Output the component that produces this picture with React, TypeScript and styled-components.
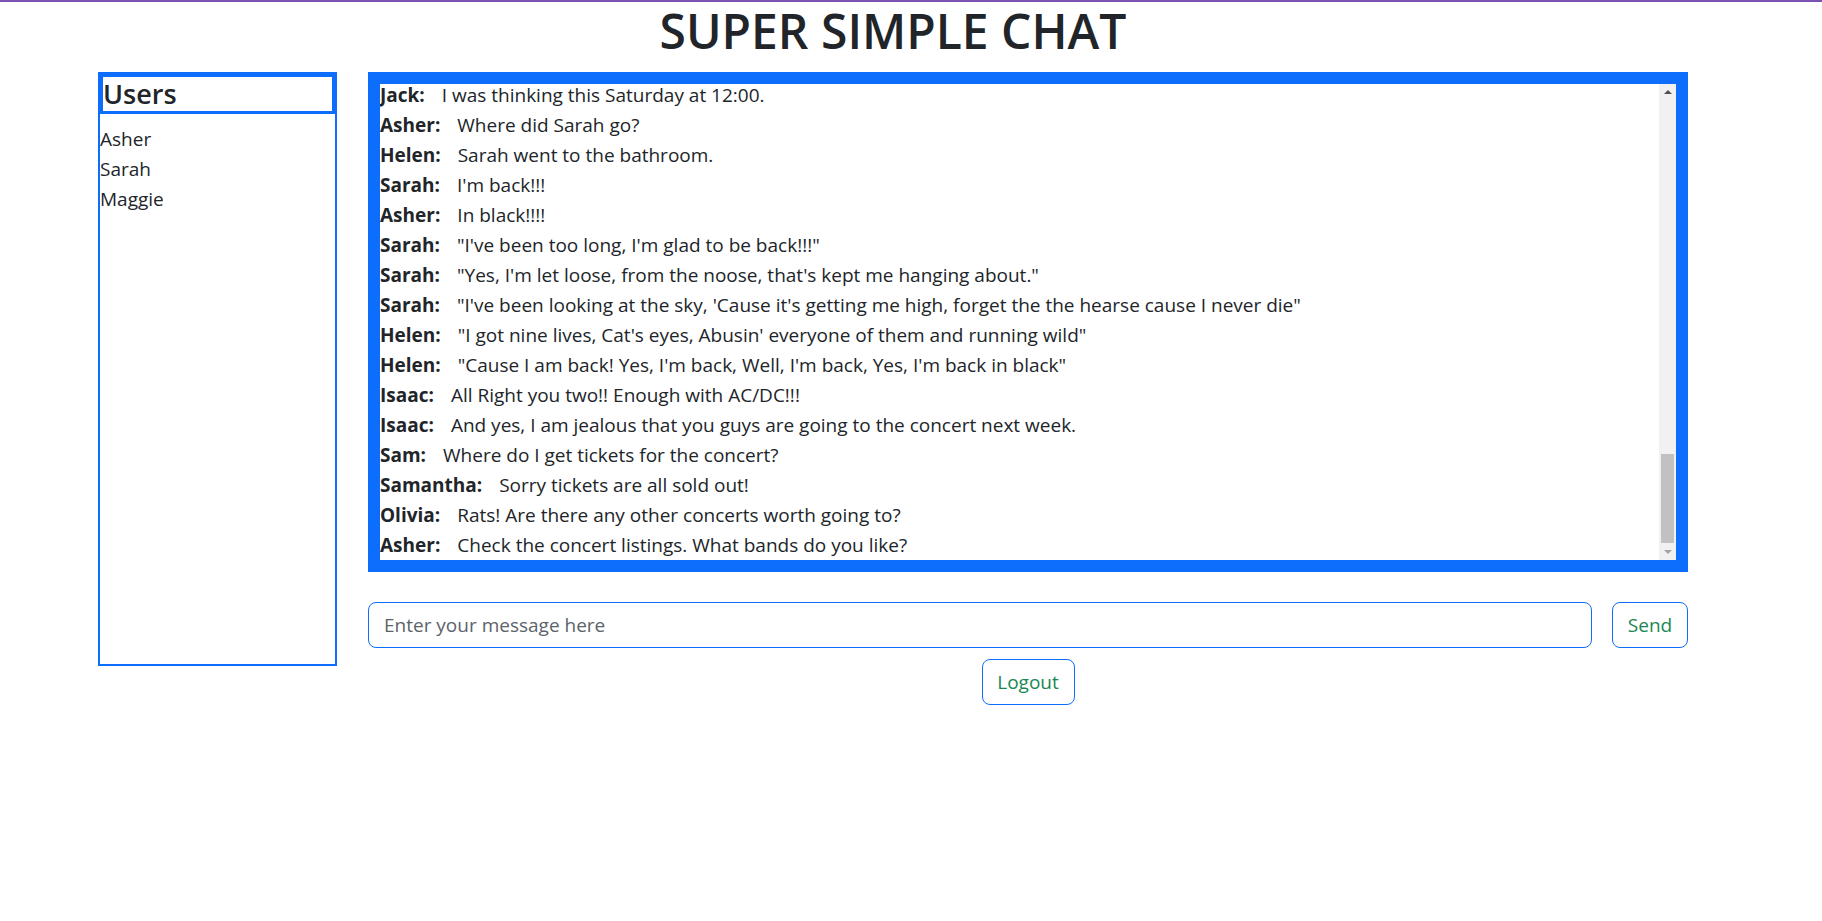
import React from "react";
import styled, { createGlobalStyle } from "styled-components";

const GlobalStyle = createGlobalStyle`
  html, body {
    margin: 0;
    padding: 0;
    background: #ffffff;
  }
  body {
    font-family: "Open Sans", "Noto Sans", "Liberation Sans", sans-serif;
    color: #212529;
  }
  * { box-sizing: border-box; }
`;

const Page = styled.div`
  border-top: 2px solid #7b52b4;
  min-height: 100vh;
`;

const Container = styled.div`
  width: 1590px;
  margin-left: 98px;
  display: flex;
  flex-direction: column;
`;

const Title = styled.h1`
  margin: 0 0 12px 0;
  text-align: center;
  font-size: 48px;
  line-height: 58px;
  font-weight: 600;
  color: #212529;
`;

const Columns = styled.div`
  display: flex;
  gap: 31px;
  align-items: flex-start;
`;

const UsersPanel = styled.aside`
  width: 239px;
  height: 594px;
  border: 2px solid #0d6efd;
  display: flex;
  flex-direction: column;
`;

const UsersHeading = styled.h3`
  margin: 0 0 10px 0;
  border: 3px solid #0d6efd;
  font-size: 27px;
  line-height: 34px;
  font-weight: 600;
  color: #212529;
`;

const UserName = styled.div`
  font-size: 19px;
  line-height: 30px;
  color: #212529;
`;

const ChatColumn = styled.section`
  width: 1320px;
  display: flex;
  flex-direction: column;
  align-items: center;
`;

const ChatFrame = styled.div`
  width: 100%;
  height: 500px;
  border: 12px solid #0d6efd;
  background: #ffffff;
  display: flex;
`;

const Messages = styled.div`
  flex: 1;
  min-width: 0;
  overflow: hidden;
  display: flex;
  flex-direction: column;
  justify-content: flex-end;
`;

const ScrollBar = styled.div`
  width: 17px;
  flex-shrink: 0;
  background: #f1f1f1;
  display: flex;
  flex-direction: column;
`;

const ScrollButton = styled.div<{ $down?: boolean }>`
  height: 17px;
  flex-shrink: 0;
  display: flex;
  align-items: center;
  justify-content: center;

  &::before {
    content: "";
    width: 0;
    height: 0;
    border-left: 4px solid transparent;
    border-right: 4px solid transparent;
    ${(p) =>
      p.$down
        ? "border-top: 4px solid #a3a3a3; margin-top: 1px;"
        : "border-bottom: 4px solid #505050; margin-bottom: 1px;"}
  }
`;

const ScrollTrack = styled.div`
  flex: 1;
  display: flex;
  flex-direction: column;
  justify-content: flex-end;
`;

const ScrollThumb = styled.div`
  height: 89px;
  margin: 0 2px;
  background: #c1c1c1;
`;

const MessageRow = styled.div`
  flex-shrink: 0;
  font-size: 19px;
  line-height: 30px;
  color: #212529;
  white-space: nowrap;
`;

const Sender = styled.strong`
  font-weight: 700;
  margin-right: 17px;
`;

const InputRow = styled.form`
  width: 100%;
  margin-top: 30px;
  display: flex;
  gap: 20px;
`;

const MessageInput = styled.input`
  flex: 1;
  height: 46px;
  border: 1px solid #0d6efd;
  border-radius: 8px;
  padding: 0 15px;
  font-family: inherit;
  font-size: 19px;
  color: #212529;
  outline: none;
  &::placeholder {
    color: #5c636a;
  }
`;

const OutlineButton = styled.button<{ $width: number }>`
  width: ${(p) => p.$width}px;
  height: 46px;
  background: #ffffff;
  border: 1px solid #0d6efd;
  border-radius: 8px;
  font-family: inherit;
  font-size: 19px;
  color: #198754;
  padding: 0;
  cursor: pointer;
`;

const LogoutButton = styled(OutlineButton)`
  margin-top: 11px;
`;

const users = ["Asher", "Sarah", "Maggie"];

const messages: [string, string][] = [
  ["Jack", "I was thinking this Saturday at 12:00."],
  ["Asher", "Where did Sarah go?"],
  ["Helen", "Sarah went to the bathroom."],
  ["Sarah", "I'm back!!!"],
  ["Asher", "In black!!!!"],
  ["Sarah", "\"I've been too long, I'm glad to be back!!!\""],
  ["Sarah", "\"Yes, I'm let loose, from the noose, that's kept me hanging about.\""],
  ["Sarah", "\"I've been looking at the sky, 'Cause it's getting me high, forget the the hearse cause I never die\""],
  ["Helen", "\"I got nine lives, Cat's eyes, Abusin' everyone of them and running wild\""],
  ["Helen", "\"Cause I am back! Yes, I'm back, Well, I'm back, Yes, I'm back in black\""],
  ["Isaac", "All Right you two!! Enough with AC/DC!!!"],
  ["Isaac", "And yes, I am jealous that you guys are going to the concert next week."],
  ["Sam", "Where do I get tickets for the concert?"],
  ["Samantha", "Sorry tickets are all sold out!"],
  ["Olivia", "Rats! Are there any other concerts worth going to?"],
  ["Asher", "Check the concert listings. What bands do you like?"],
];

export default function App() {
  return (
    <Page>
      <GlobalStyle />
      <Container>
        <Title>SUPER SIMPLE CHAT</Title>
        <Columns>
          <UsersPanel>
            <UsersHeading>Users</UsersHeading>
            {users.map((u) => (
              <UserName key={u}>{u}</UserName>
            ))}
          </UsersPanel>
          <ChatColumn>
            <ChatFrame>
              <Messages>
                {messages.map(([who, text], i) => (
                  <MessageRow key={i}>
                    <Sender>{who}:</Sender>
                    {text}
                  </MessageRow>
                ))}
              </Messages>
              <ScrollBar>
                <ScrollButton />
                <ScrollTrack>
                  <ScrollThumb />
                </ScrollTrack>
                <ScrollButton $down />
              </ScrollBar>
            </ChatFrame>
            <InputRow onSubmit={(e) => e.preventDefault()}>
              <MessageInput placeholder="Enter your message here" />
              <OutlineButton $width={76} type="submit">
                Send
              </OutlineButton>
            </InputRow>
            <LogoutButton $width={93} type="button">
              Logout
            </LogoutButton>
          </ChatColumn>
        </Columns>
      </Container>
    </Page>
  );
}
